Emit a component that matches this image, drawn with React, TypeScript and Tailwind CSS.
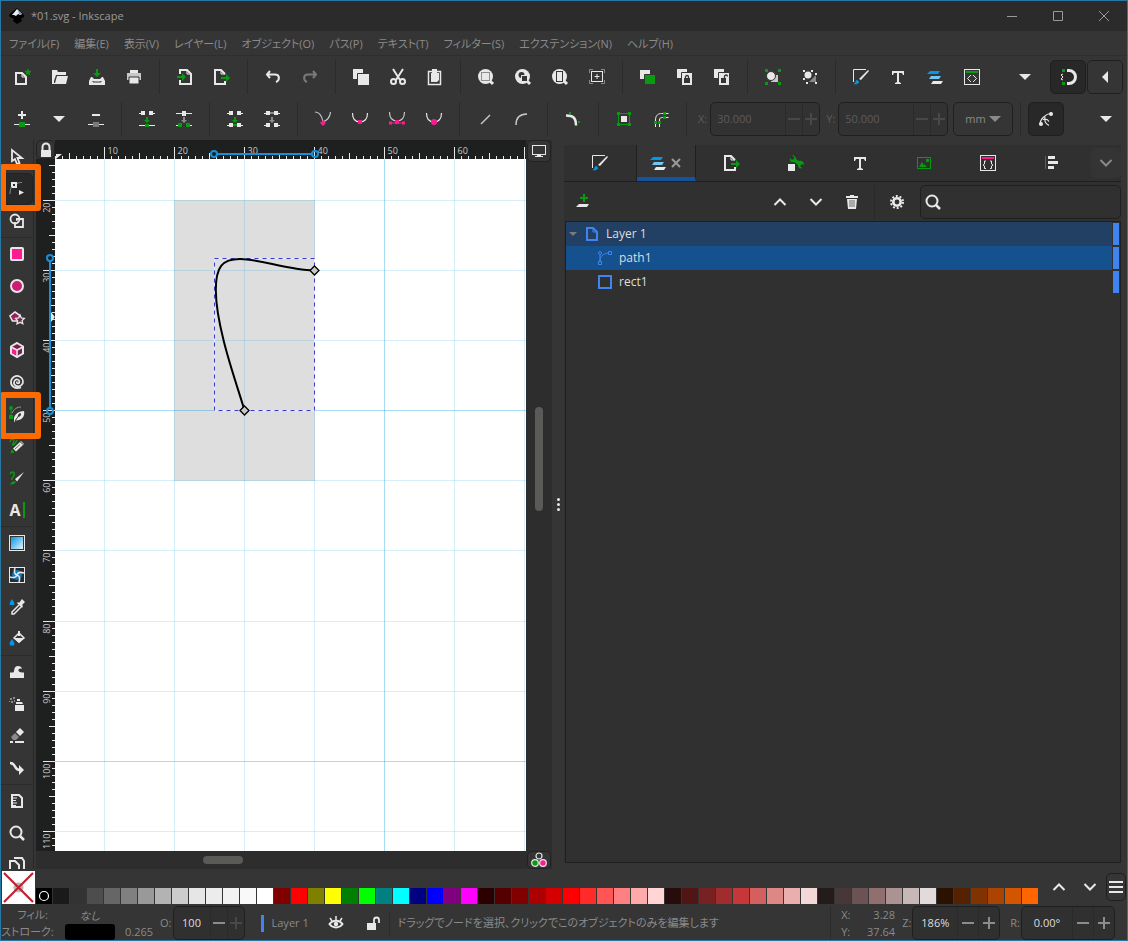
import type { ReactNode } from "react";
import clsx from "clsx";

const W = "#e8e8e8";
const G = "#089a0f";
const P = "#ff1a8f";
const B = "#0098e8";
const L = "#74c4f0";
const D = "#353535";

const star = "M13 0l.9 2.1 2.2.2-1.7 1.5.5 2.2-1.9-1.2L11.100 6l.5-2.200L9.900 2.300l2.200-.2z";

const icons: Record<string, ReactNode> = {
  new: (
    <>
      <path d="M1 4h6l4 4v7H1z" fill="none" stroke={W} strokeWidth="2" />
      <path d="M7 4v4h4" fill="none" stroke={W} />
      <path d={star} fill={G} stroke={G} strokeWidth=".6" />
    </>
  ),
  open: <path d="M0 1h5l1 2h8v3H4L2 12v2h1l2-7h11l-2 8H0z" fill={W} />,
  save: (
    <>
      <path d="M7 0h2v4h3L8 8 4 4h3z" fill={G} />
      <path d="M2 8h1l2 2h6l2-2h1l2 4v4H0v-4z" fill={W} />
      <path d="M4 12v1h8v-1" fill="none" stroke={D} />
    </>
  ),
  print: (
    <>
      <path d="M4 1h8v3H4z" fill={W} />
      <path d="M1 4h14v7H1z" fill="#c8c8c8" />
      <path d="M3 8h10v7H3z" fill={W} stroke={D} />
    </>
  ),
  import: (
    <>
      <path d="M3 5V1h7l4 4v10H3v-4" fill="none" stroke={W} strokeWidth="2" />
      <path d="M10 1v4h4" fill="none" stroke={W} />
      <path d="M0 7h5V4l4 4-4 4V9H0z" fill={G} />
    </>
  ),
  export: (
    <>
      <path d="M11 5L7 1H1v14h10v-3" fill="none" stroke={W} strokeWidth="2" />
      <path d="M7 1v4h4" fill="none" stroke={W} />
      <path d="M7 8h5V5l4 4-4 4v-3H7z" fill={G} />
    </>
  ),
  undo: <path d="M5 2L2 5.500 5 9M2 5.500h8c5 0 5 6 1 7.500" fill="none" stroke={W} strokeWidth="2" />,
  redo: <path d="M11 2l3 3.500L11 9M14 5.500H6c-5 0-5 6-1 7.500" fill="none" stroke="#7a7a7a" strokeWidth="2" />,
  copy: (
    <>
      <path d="M0 0h10v10H0z" fill={W} />
      <path d="M4.500 4.500h12v12h-12z" fill={W} stroke={D} />
    </>
  ),
  cut: (
    <>
      <path d="M3 0l7 11M13 0L6 11" stroke={W} strokeWidth="2" />
      <circle cx="3.500" cy="12.500" r="2.500" fill="none" stroke={W} strokeWidth="2" />
      <circle cx="12.500" cy="12.500" r="2.500" fill="none" stroke={W} strokeWidth="2" />
    </>
  ),
  paste: (
    <>
      <path d="M1.500 2.500h12v13h-12z" fill="none" stroke={W} strokeWidth="1.500" />
      <path d="M5 0h5v4H5zM4 4h8v7l-2 2H4z" fill={W} />
    </>
  ),
  zoomSelection: (
    <>
      <circle cx="7.500" cy="7.500" r="7.500" fill={W} />
      <path d="M12 12l3 3" stroke={W} strokeWidth="3" />
      <rect x="3.500" y="3.500" width="8" height="8" fill="none" stroke={D} strokeDasharray="1 1" />
    </>
  ),
  zoomDrawing: (
    <>
      <circle cx="7.500" cy="7.500" r="7.500" fill={W} />
      <path d="M12 12l3 3" stroke={W} strokeWidth="3" />
      <circle cx="6.500" cy="6" r="3" fill={D} />
      <path d="M6.500 6.500h6v6h-6z" fill={D} stroke={W} />
    </>
  ),
  zoomPage: (
    <>
      <circle cx="7.500" cy="7.500" r="7.500" fill={W} />
      <path d="M12 12l3 3" stroke={W} strokeWidth="3" />
      <rect x="4.500" y="2.500" width="6" height="10" fill={W} stroke={D} />
    </>
  ),
  zoomCenter: (
    <>
      <path d="M.5 4V.5H4M12 .5h3.500V4M15.500 11v3.500H12M4 14.500H.5V11" fill="none" stroke="#8a8a8a" />
      <rect x="2.500" y="2.500" width="11" height="10" fill="none" stroke={W} />
      <path d="M8 5v5M5.500 7.500h5" stroke={W} />
    </>
  ),
  duplicate: (
    <>
      <path d="M0 1h10v9H0z" fill={W} />
      <path d="M4.500 5.500h11v10h-11z" fill={G} stroke={D} />
    </>
  ),
  clone: (
    <>
      <path d="M0 0h10v9H0z" fill={W} />
      <path d="M4.500 3.500h11v13h-11z" fill={W} stroke={D} />
      <path d="M8.500 9V8a1.500 1.500 0 0 1 3 0v1" fill="none" stroke={D} strokeWidth="1.300" />
      <path d="M7 9h6v5H7z" fill={D} />
    </>
  ),
  unlink: (
    <>
      <path d="M0 0h10v9H0z" fill={W} />
      <path d="M4.500 3.500h11v13h-11z" fill={W} stroke={D} />
      <path d="M10.500 9V7.500a1.500 1.500 0 0 1 3 0" fill="none" stroke={D} strokeWidth="1.300" />
      <path d="M7 9h5v5H7z" fill={D} />
    </>
  ),
  group: (
    <>
      <path d="M0 0h3v3H0zM13 0h3v3h-3zM0 13h3v3H0zM13 13h3v3h-3z" fill={G} />
      <path d="M7 6h6v7H6z" fill="#c8c8c8" />
      <circle cx="6" cy="7" r="4.500" fill={W} stroke={D} />
    </>
  ),
  ungroup: (
    <>
      <path d="M1 1h2v2H1zM9 1h2v2H9zM1 9h2v2H1zM4 13h2v2H4zM13 4h2v2h-2zM13 13h2v2h-2z" fill={W} />
      <path d="M7 13l7-7v7z" fill="#8a8a8a" />
      <circle cx="6" cy="6" r="3.500" fill={W} />
    </>
  ),
  fillStroke: (
    <>
      <path d="M13 .5H.5V13" fill="none" stroke={W} />
      <path d="M15 1l1 1-8 9-2-1z" fill={W} />
      <path d="M4 11l2 2c-1 2-3 2-5 2 2-1 1-2 3-4z" fill={B} stroke={B} strokeWidth=".6" />
    </>
  ),
  text: <path d="M2 2h12v4h-1l-1-2H9v9l2 1v1H5v-1l2-1V4H4L3 6H2z" fill={W} />,
  layers: (
    <>
      <path d="M3 2h10l-2 3H0z" fill={B} />
      <path d="M4 7h10l-2 3H2z" fill={L} />
      <path d="M6 12h10l-2 3H4z" fill={W} />
    </>
  ),
  xml: (
    <>
      <rect x=".5" y=".5" width="15" height="15" fill="none" stroke={W} />
      <path d="M2 2h12v2H2z" fill={G} />
      <path d="M7 6L3.500 9.500 7 13M9 6l3.500 3.500L9 13" fill="none" stroke={W} />
    </>
  ),
  down: <path d="M2 5h12l-6 6z" fill={W} />,
  left: <path d="M11 2v12L5 8z" fill={W} />,
  snap: (
    <>
      <path d="M7 1.500h2a6.500 6.500 0 0 1 0 13H7" fill="none" stroke={W} strokeWidth="3" />
      <path d="M2 0h3v3H2zM2 13h3v3H2z" fill={G} />
      <path d="M3 5L1 6l2 2-2 2 2 1" fill="none" stroke={W} />
    </>
  ),
  addNode: (
    <>
      <path d="M8 0v8M4 4h8" stroke={W} strokeWidth="2" />
      <path d="M0 13.500h16" stroke={W} />
      <path d="M5 11h6v5H5z" fill={G} />
    </>
  ),
  deleteNode: (
    <>
      <path d="M4 4h8" stroke={W} strokeWidth="2" />
      <path d="M0 13.500h16" stroke={W} />
      <path d="M5 11h6v5H5z" fill="#7a7a7a" />
    </>
  ),
  joinNodes: (
    <>
      <path d="M0 2.500h3M13 2.500h3M0 14.500h16" stroke={W} />
      <path d="M2 0h4v4H2zM10 0h4v4h-4z" fill={W} />
      <path d="M7 6h2v3h2l-3 3-3-3h2zM6 13h4v3H6z" fill={G} />
    </>
  ),
  breakNodes: (
    <>
      <path d="M0 2.500h16" stroke={W} />
      <path d="M6 0h4v5H6z" fill={W} />
      <path d="M7 6h2v3h2l-3 3-3-3h2z" fill="#8a8a8a" />
      <path d="M0 14.500h3M13 14.500h3" stroke={W} />
      <path d="M2 12h4v4H2zM10 12h4v4h-4z" fill={G} />
    </>
  ),
  joinSegment: (
    <>
      <path d="M0 2.500h3M13 2.500h3M0 14.500h3M13 14.500h3" stroke={W} />
      <path d="M2 0h4v4H2zM10 0h4v4h-4zM2 12h4v4H2zM10 12h4v4h-4z" fill={W} />
      <path d="M7 6h2v3h2l-3 3-3-3h2zM6 13h4v2H6z" fill={G} />
    </>
  ),
  deleteSegment: (
    <>
      <path d="M0 2.500h3M13 2.500h3M0 14.500h3M13 14.500h3" stroke={W} />
      <path d="M2 0h4v4H2zM10 0h4v4h-4zM2 12h4v4H2zM10 12h4v4h-4z" fill={W} />
      <path d="M7 6h2v3h2l-3 3-3-3h2zM6 1h4v2H6z" fill="#8a8a8a" />
    </>
  ),
  cusp: (
    <>
      <path d="M0 1c5 0 7 4 8 10 4-2 7-4 7.500-10" fill="none" stroke="#c8c8c8" strokeWidth="1.200" />
      <path d="M8 9l3 3-3 3-3-3z" fill={P} />
    </>
  ),
  smooth: (
    <>
      <path d="M.5 2c0 6 3 9 7.500 9s7.500-3 7.500-9" fill="none" stroke={W} strokeWidth="1.200" />
      <path d="M6 9h4v4H6z" fill={P} />
    </>
  ),
  symmetric: (
    <>
      <path d="M.5 1c0 6 3 9 7.500 9s7.500-3 7.500-9" fill="none" stroke="#c8c8c8" strokeWidth="1.200" />
      <path d="M6 9h4v4H6zM0 10.500h3v3H0zM13 10.500h3v3h-3zM3 11.500h10v1H3z" fill={P} />
    </>
  ),
  auto: (
    <>
      <path d="M.5 2c0 6 3 9 7.500 9s7.500-3 7.500-9" fill="none" stroke={W} strokeWidth="1.200" />
      <circle cx="8" cy="11" r="3" fill={P} />
    </>
  ),
  line: <path d="M4 13l9-9" stroke="#c8c8c8" strokeWidth="1.500" />,
  curve: <path d="M2 14C2 7 6 3 13 3" fill="none" stroke="#c8c8c8" strokeWidth="1.500" />,
  corner: (
    <>
      <path d="M1 4.500c7 0 10 2 10 10" fill="none" stroke={W} strokeWidth="2.500" />
      <path d="M4 1h2v2H4zM13 10h2v2h-2z" fill={G} />
    </>
  ),
  objectPath: (
    <>
      <rect x="2.500" y="2.500" width="11" height="11" fill="none" stroke={G} />
      <path d="M1 1h3v3H1zM12 1h3v3h-3zM1 12h3v3H1zM12 12h3v3h-3z" fill={G} />
      <path d="M5 5h6v6H5z" fill={W} />
    </>
  ),
  strokePath: (
    <>
      <path d="M2.500 16V9c0-5 3-6.500 6-6.500h7M6.500 16V9c0-2 1-2.500 3-2.500h6" fill="none" stroke={W} />
      <path d="M10 1h3v3h-3zM10 5h3v3h-3zM1 10h3v3H1zM5 10h3v3H5z" fill={G} />
    </>
  ),
  handles: (
    <>
      <path d="M2 14C2 8 7 3 14 2M7 5.500c-1 4 0 7 4 9M5 8.500c3-1 5 0 6 2" fill="none" stroke={W} strokeWidth="1.200" />
      <circle cx="3" cy="13" r="2" fill={W} />
      <circle cx="13" cy="3" r="2" fill={W} />
    </>
  ),
  selector: <path d="M3 1v11l3-2 2 5 2.500-1-2-5H13z" fill="none" stroke={W} strokeWidth="1.800" />,
  node: (
    <>
      <rect x="3" y="2" width="4" height="4" fill="none" stroke={W} strokeWidth="2" />
      <path d="M8 2.500c2-1 3-1 5-1M2.500 6c-1 2-1.500 4-1.500 7" fill="none" stroke="#8a8a8a" />
      <path d="M10 9l5 2.500-5 2.500z" fill={W} />
    </>
  ),
  builder: (
    <>
      <circle cx="6" cy="6" r="4.500" fill="none" stroke={W} strokeWidth="1.800" />
      <path d="M7 6h7v8H6V9" fill="none" stroke={W} strokeWidth="1.800" />
      <path d="M7 7l3 2" stroke={W} />
    </>
  ),
  rect: <rect x="2" y="2" width="12" height="12" fill={P} stroke={W} strokeWidth="2" rx="1" />,
  ellipse: <circle cx="8" cy="8" r="6" fill="#cc1c74" stroke={W} strokeWidth="2" />,
  polygon: (
    <>
      <path d="M6 2l5 3.500L9.500 11h-6L1 6z" fill="#a01c60" stroke={W} strokeWidth="1.600" />
      <path d="M11 5l1.300 3 3 .4-2.200 2.200.7 3.200-2.800-1.500L8 13.800l.6-3.200-2.100-2.200 3.200-.4z" fill="#6a2a4a" stroke={W} strokeWidth="1.300" />
    </>
  ),
  box: (
    <>
      <path d="M8 1l6 3.500v7L8 15l-6-3.500v-7z" fill="#7a2050" stroke={W} strokeWidth="2" />
      <path d="M3 6l4 2v5l-4-2z" fill={P} />
      <path d="M2 5l6 3 6-3M8 8v6" fill="none" stroke={W} strokeWidth="1.600" />
    </>
  ),
  spiral: (
    <path d="M12 13.500C6 15.500 1.500 12 2 7.500 2.500 3 7 1 10.500 2.500 14 4 15 8 13 10.500c-2 2.500-6 2.500-7.500 0C4 8 6 5 8.500 5.500c2.500.5 2.500 3.500.500 4C7.500 9.500 7.500 8 8.500 7.800" fill="none" stroke={W} strokeWidth="1.700" />
  ),
  pen: (
    <>
      <path d="M2 2v9" stroke={G} />
      <circle cx="2" cy="2" r="2" fill={G} />
      <path d="M0 9h4v4H0z" fill={G} />
      <path d="M3 7c2-4 5-6 9-6" fill="none" stroke="#9a9a9a" />
      <path d="M15 5c1 4-1 8-5 9l-3 .5-2 1.500v-4c1-4 5-7 10-7z" fill={W} />
      <path d="M6 15l3.500-5" stroke={D} />
      <ellipse cx="10.500" cy="9" rx="1.200" ry="2" transform="rotate(35 10.500 9)" fill={D} />
    </>
  ),
  pencil: (
    <>
      <path d="M1 4c1-4 4-4 4-1S2 7 4 7s3-3 4-5" fill="none" stroke={G} strokeWidth="1.400" />
      <path d="M2 15l1-3 2 2z" fill={G} stroke={G} />
      <path d="M4 10.500L12 3l3 3-8 7.500z" fill={W} />
      <path d="M11 3.500l3 3" stroke={D} />
      <path d="M6 11l5-4.500" stroke={D} strokeWidth=".7" />
    </>
  ),
  calligraphy: (
    <>
      <path d="M1 4c2-3 5-2 4 1S2 8 3 10" fill="none" stroke={G} strokeWidth="1.600" />
      <path d="M6 11c-2 0-4 1-5 3.500 3 0 4 0 6-2.500z" fill={G} />
      <path d="M15 2l-9 7 2 2.500z" fill={W} />
    </>
  ),
  gradient: (
    <>
      <defs>
        <linearGradient id="blue-fade" x1="0" y1="0" x2="1" y2="1">
          <stop offset="0" stopColor={B} />
          <stop offset="1" stopColor="#e8f4fb" />
        </linearGradient>
      </defs>
      <rect x=".5" y=".5" width="15" height="15" fill="none" stroke={W} />
      <path d="M2 2h12v12H2z" fill="url(#blue-fade)" />
    </>
  ),
  mesh: (
    <>
      <rect x=".5" y=".5" width="15" height="15" fill="#252b30" stroke={W} />
      <circle cx="8" cy="8" r="5" fill="#0c7abc" />
      <path d="M8 8c-3-1-3-4-2-7M8 8c1-3 4-3 7-2M8 8c3 1 3 4 2 7M8 8c-1 3-4 3-7 2" fill="none" stroke={W} strokeWidth="1.500" />
    </>
  ),
  dropper: (
    <>
      <path d="M3 0c2 3 3 4 2 6H1C0 4 1 3 3 0z" fill={B} />
      <path d="M10 6l-7 7v2h2l7-7" fill="none" stroke={W} strokeWidth="1.500" />
      <path d="M8 4l5 5 1-2-1-1 3-3-3-3-3 4-1-1z" fill={W} />
    </>
  ),
  bucket: (
    <>
      <path d="M3 8c2 3 3 4 2 6.500H1C0 12 1 11 3 8z" fill={B} />
      <path d="M5 7l5-5 5 5-5 4z" fill="none" stroke={W} strokeWidth="1.500" />
      <path d="M5 7h10l-5 5zM9 0h2v5H9z" fill={W} />
    </>
  ),
  tweak: <path d="M1 14V8.500h3c2 0 0-6.500 5-6.500 2 0 4 1 4 3-2-1-4 0-3.500 2 1 1.500 3 1.500 5.500 1.500V14z" fill={W} />,
  spray: (
    <>
      <path d="M6 9h9v6H6zM7 6h6l1 2H7zM8 3h3v2H8z" fill={W} />
      <path d="M1 2h2v2H1zM4 1h2v2H4zM2 5h2v2H2zM5 4h1v2H5zM0 5h1v1H0z" fill="#8a8a8a" />
    </>
  ),
  eraser: (
    <>
      <path d="M7 4l4-4 4 4-4 4z" fill={W} />
      <path d="M6 5l4 4-3 3H4L2 9z" fill="#8a8a8a" />
      <path d="M1 13h3v2H1zM6 13h9v2H6z" fill={W} />
    </>
  ),
  connector: (
    <>
      <path d="M1 3c7 0 3 7 10 7" fill="none" stroke={W} strokeWidth="2.500" />
      <path d="M10 5l5 5-5 5z" fill={W} />
    </>
  ),
  measure: (
    <>
      <path d="M3 2h7l3 3v9H3z" fill="none" stroke={W} strokeWidth="2" />
      <path d="M4 5h4M4 7.500h3M4 10h4M4 12.500h3" stroke={W} />
    </>
  ),
  zoom: (
    <>
      <circle cx="7" cy="7" r="5.500" fill="none" stroke={W} strokeWidth="2" />
      <path d="M11 11l4 4" stroke={W} strokeWidth="2.500" />
    </>
  ),
  pages: (
    <>
      <path d="M1 7V4h5l4 4v7H1z" fill="none" stroke={W} strokeWidth="2" />
      <path d="M5 1h8l2 3v9" fill="none" stroke={W} strokeWidth="2" />
    </>
  ),
  lock: (
    <>
      <path d="M4.500 8V5a3.500 3.500 0 0 1 7 0v3" fill="none" stroke={W} strokeWidth="2" />
      <path d="M3 8h10v7H3z" fill={W} />
    </>
  ),
  unlock: (
    <>
      <path d="M9 8V5a2.500 2.500 0 0 1 5 0v3" fill="none" stroke={W} strokeWidth="1.800" />
      <path d="M2 8h9v7H2z" fill={W} />
    </>
  ),
  display: (
    <>
      <rect x="1.500" y="2.500" width="13" height="9" fill="none" stroke={W} />
      <path d="M6 12h4v1h2v1H4v-1h2z" fill={W} />
    </>
  ),
  colors: (
    <>
      <circle cx="8" cy="4" r="3" fill="none" stroke={W} strokeWidth="1.200" />
      <circle cx="4" cy="11" r="3.300" fill={G} stroke={W} strokeWidth="1.200" />
      <circle cx="12" cy="11" r="3.300" fill={P} stroke={W} strokeWidth="1.200" />
    </>
  ),
  wrench: (
    <>
      <path d="M0 9h7v7H0z" fill={W} />
      <path d="M4 0l2 2v2l-2 1-2-2C1 6 3 8 6 7l4 3c0 3 2 4 4 3l-2-2 2-2 2 1c0-3-2-5-5-4L8 4c0-2-2-4-4-4z" fill={G} />
    </>
  ),
  image: (
    <>
      <rect x="1.500" y="2.500" width="13" height="11" fill="none" stroke={G} />
      <path d="M3 12l3-5 3 5zM10 4h3v3h-3zM8 9l3 3H8z" fill={G} />
    </>
  ),
  css: (
    <>
      <rect x=".5" y=".5" width="15" height="15" fill="none" stroke={W} />
      <path d="M2 2h12v2H2z" fill={P} />
      <path d="M6 6H4.500v3L3 10l1.500 1v2.500H6M10 6h1.500v3l1.500 1-1.500 1v2.500H10" fill="none" stroke={W} />
    </>
  ),
  align: (
    <>
      <path d="M1.500 1v13" stroke={G} />
      <path d="M4 1h7v3H4zM4 6h10v3H4zM4 11h6v3H4z" fill={W} />
    </>
  ),
  addLayer: (
    <>
      <path d="M9 0v8M5 4h8" stroke={G} strokeWidth="2" />
      <path d="M4 10h10l-2 3H1z" fill={W} />
    </>
  ),
  up: <path d="M2.500 11L8 5.500l5.500 5.500" fill="none" stroke={W} strokeWidth="2" />,
  chevron: <path d="M2.500 5L8 10.500 13.500 5" fill="none" stroke={W} strokeWidth="2" />,
  chevronDim: <path d="M2.500 5L8 10.500 13.500 5" fill="none" stroke="#8a8a8a" strokeWidth="2" />,
  trash: (
    <>
      <path d="M2 3V2h4V1h4v1h4v2H2zM3 5h10l-1 10H4z" fill={W} />
      <path d="M6 6v7M8 6v7M10 6v7" stroke="#6a6a6a" />
    </>
  ),
  gear: (
    <>
      <circle cx="8" cy="8" r="3.700" fill="none" stroke={W} strokeWidth="2.600" />
      <circle cx="8" cy="8" r="6" fill="none" stroke={W} strokeWidth="2" strokeDasharray="1.900 1.870" />
    </>
  ),
  layerPage: (
    <>
      <path d="M3 2h6l4 4v8H3z" fill="none" stroke="#4084f0" strokeWidth="2" />
      <path d="M9 2v4h4" fill="none" stroke="#4084f0" />
    </>
  ),
  pathItem: (
    <>
      <path d="M3 5v7M3 11c0-5 3-7 8-8" fill="none" stroke="#4084f0" />
      <circle cx="3" cy="3" r="1.500" fill="none" stroke="#4084f0" />
      <path d="M11.500 1.500h3v3h-3zM1.500 11.500h3v3h-3z" fill="none" stroke="#4084f0" />
    </>
  ),
  rectItem: <rect x="2" y="2" width="12" height="12" fill="none" stroke="#4084f0" strokeWidth="2" />,
  eye: (
    <>
      <path d="M1.500 9c3-4.500 10-4.500 13 0-3 4.500-10 4.500-13 0z" fill="none" stroke={W} strokeWidth="2" />
      <circle cx="8" cy="9" r="2.200" fill={W} />
      <path d="M8 1v4M2 3l2 3M14 3l-2 3" stroke={W} strokeWidth="1.500" />
    </>
  ),
  menu: <path d="M1 3h14M1 8h14M1 13h14" stroke={W} strokeWidth="2" />,
};

const menus = ["ファイル(F)", "編集(E)", "表示(V)", "レイヤー(L)", "オブジェクト(O)", "パス(P)", "テキスト(T)", "フィルター(S)", "エクステンション(N)", "ヘルプ(H)"];

const commandGroups = [
  ["new", "open", "save", "print"],
  ["import", "export"],
  ["undo", "redo"],
  ["copy", "cut", "paste"],
  ["zoomSelection", "zoomDrawing", "zoomPage", "zoomCenter"],
  ["duplicate", "clone", "unlink"],
  ["group", "ungroup"],
  ["fillStroke", "text", "layers", "xml"],
];

const nodeGroups = [
  ["addNode", "down", "deleteNode"],
  ["joinNodes", "breakNodes"],
  ["joinSegment", "deleteSegment"],
  ["cusp", "smooth", "symmetric", "auto"],
  ["line", "curve"],
  ["corner"],
  ["objectPath", "strokePath"],
];

const toolGroups = [
  ["selector", "node", "builder"],
  ["rect", "ellipse", "polygon", "box", "spiral", "pen", "pencil", "calligraphy", "textTool"],
  ["gradient", "mesh", "dropper", "bucket"],
  ["tweak", "spray", "eraser", "connector"],
  ["measure", "zoom", "pages"],
];

const panelTabs = ["export", "wrench", "text", "image", "css", "align"];

const layerRows = [
  { name: "Layer 1", icon: "layerPage", row: "bg-[#214064] pl-[3px]", expandable: true },
  { name: "path1", icon: "pathItem", row: "bg-[#15508f] pl-[31px]", expandable: false },
  { name: "rect1", icon: "rectItem", row: "pl-[31px]", expandable: false },
];

const palette = [
  "#1a1a1a", "#333333", "#4d4d4d", "#666666", "#808080", "#999999", "#b3b3b3", "#cccccc", "#e6e6e6", "#ececec", "#f2f2f2", "#f9f9f9", "#ffffff",
  "#800000", "#ff0000", "#808000", "#ffff00", "#008000", "#00ff00", "#008080", "#00ffff", "#000080", "#0000ff", "#800080", "#ff00ff",
  "#2b0000", "#550000", "#800000", "#aa0000", "#d40000", "#ff0000", "#ff2a2a", "#ff5555", "#ff8080", "#ffaaaa", "#ffd5d5",
  "#280b0b", "#501616", "#782121", "#a02c2c", "#c83737", "#d35f5f", "#de8787", "#e9afaf", "#f4d7d7",
  "#241c1c", "#483737", "#6c5353", "#916f6f", "#ac9393", "#c8b7b7", "#e3dbdb",
  "#2b1100", "#552200", "#803300", "#aa4400", "#d45500", "#ff6600",
];

const Icon = ({ name }: { name: string }) => (
  <svg viewBox="0 0 16 16" className="size-4 shrink-0 overflow-visible" aria-hidden="true">
    {icons[name]}
  </svg>
);

const ToolbarGroups = ({ groups }: { groups: string[][] }) => (
  <>
    {groups.map((group, index) => (
      <div key={index} className="flex shrink-0 items-center">
        {index > 0 && <div className="ml-[7px] mr-[6px] h-[34px] w-px bg-[#2b2b2b]" />}
        {group.map((name) => (
          <button key={name} aria-label={name} className="flex h-[34px] items-center pl-[11px] pr-[10px]">
            <Icon name={name} />
          </button>
        ))}
      </div>
    ))}
  </>
);

type SpinProps = { id: string; label: string; value: string; width: string; step: string; dim?: boolean; dimPlus?: boolean };

const Spin = ({ id, label, value, width, step, dim, dimPlus }: SpinProps) => (
  <div className={clsx("flex shrink-0 items-center", dim ? "gap-[3px]" : "gap-px")}>
    <label htmlFor={id} className={dim ? "text-[#5c5c5c]" : "text-[#8a8a8a]"}>{label}</label>
    <div className={clsx("flex h-[34px] overflow-hidden rounded-[5px] border border-[#1f1f1f]", width, dim ? "bg-[#323232]" : "bg-[#303030]")}>
      <input
        id={id}
        defaultValue={value}
        className={clsx("min-w-0 flex-1 bg-transparent outline-none", dim ? "pl-[6px] text-[#5c5c5c]" : "text-center text-[#dedede]")}
      />
      <button aria-label={`${label} -`} className={clsx("flex items-center justify-center border-l border-[#2a2a2a]", step, dim ? "text-[#484848]" : "text-[#8c8c8c]")}>
        <svg viewBox="0 0 12 12" className="size-3 shrink-0"><path d="M0 6h12" stroke="currentColor" strokeWidth="2" /></svg>
      </button>
      <button aria-label={`${label} +`} className={clsx("flex items-center justify-center border-l border-[#2a2a2a]", step, dim || dimPlus ? "text-[#484848]" : "text-[#8c8c8c]")}>
        <svg viewBox="0 0 12 12" className="size-3 shrink-0"><path d="M0 6h12M6 0v12" stroke="currentColor" strokeWidth="2" /></svg>
      </button>
    </div>
  </div>
);

const gridX = (unit: number) => 49.5 + 7 * unit;
const gridY = (unit: number) => Math.floor(41.3 + 7.012 * unit) + 0.5;
const tickLength = (unit: number) => (unit % 10 === 0 ? 12 : unit % 5 === 0 ? 6 : 3);

const TopRuler = () => (
  <svg className="h-[19px] min-w-0 flex-1 bg-[#1e201f]">
    {Array.from({ length: 75 }, (_, i) => i - 7).map((unit) => (
      <path key={unit} d={`M${gridX(unit)} 19v-${tickLength(unit)}`} stroke={W} />
    ))}
    {[0, 10, 20, 30, 40, 50].map((unit) => (
      <text key={unit} x={gridX(unit) + 3} y="14" fill="#c8c8c8" fontSize="9">{unit + 10}</text>
    ))}
    <path d="M1 14h6l-6 5z" fill={W} />
    <path d="M162 14h95" stroke="#1a8fd6" strokeWidth="2" />
    <circle cx="159" cy="14" r="3" fill="none" stroke="#1a8fd6" strokeWidth="2" />
    <circle cx="260" cy="14" r="3" fill="none" stroke="#1a8fd6" strokeWidth="2" />
  </svg>
);

const SideRuler = () => (
  <svg className="w-[19px] shrink-0 bg-[#1e201f]">
    {Array.from({ length: 300 }, (_, i) => i - 5).map((unit) => (
      <path key={unit} d={`M19 ${gridY(unit)}h-${tickLength(unit)}`} stroke={W} />
    ))}
    {[0, 10, 20, 30, 40, 50, 60, 70, 80, 90].map((unit) => (
      <text key={unit} transform={`translate(14 ${gridY(unit) + 2}) rotate(-90)`} textAnchor="end" fill="#c8c8c8" fontSize="9">{unit + 20}</text>
    ))}
    <path d="M15 153l4 5-4 5z" fill={W} />
    <path d="M14 102v147" stroke="#1a8fd6" strokeWidth="2" />
    <circle cx="14" cy="99" r="3" fill="none" stroke="#1a8fd6" strokeWidth="2" />
    <circle cx="14" cy="252" r="3" fill="none" stroke="#1a8fd6" strokeWidth="2" />
  </svg>
);

const Drawing = () => (
  <svg className="min-w-0 flex-1 bg-white">
    <rect x="119" y="41" width="141" height="281" fill="#dedede" />
    {Array.from({ length: 30 }, (_, i) => i).map((i) => (
      <g key={i} stroke="#0096e0">
        <path d={`M${gridX(i * 10)} 0v3000`} strokeOpacity={i % 5 === 4 ? 0.34 : 0.16} />
        <path d={`M0 ${gridY(i * 10)}h3000`} strokeOpacity={i % 5 === 3 ? 0.34 : 0.16} />
      </g>
    ))}
    <rect x="159.500" y="99.500" width="100" height="152" fill="none" stroke="#ececf6" />
    <rect x="159.500" y="99.500" width="100" height="152" fill="none" stroke="#3a3ad0" strokeDasharray="4 4" />
    <path
      d="M189.500 251.500C183 228 161 170 160.800 131C160.800 108 167 100 185 100C205 100 232 111 259.500 111.500"
      fill="none"
      stroke="#000"
      strokeWidth="2"
    />
    <path d="M259.500 107l4.500 4.500-4.500 4.500-4.500-4.500zM189.500 247l4.500 4.500-4.500 4.500-4.500-4.500z" fill="#c8c8c8" stroke="#000" strokeWidth="1.300" />
  </svg>
);

const Toolbox = () => (
  <div className="flex w-8 shrink-0 flex-col overflow-hidden pt-px">
    {toolGroups.map((group, index) => (
      <div key={index} className={clsx("flex flex-col", index > 0 && "border-t border-[#2b2b2b]")}>
        {group.map((name) => (
          <button
            key={name}
            aria-label={name}
            className={clsx("flex h-8 w-8 shrink-0 items-center justify-center", name === "node" && "rounded-[5px] border border-[#222] bg-[#282828]")}
          >
            {name === "textTool" ? (
              <span className="flex items-center gap-[2px] text-base font-bold leading-4 text-[#e8e8e8]">
                A<span className="h-4 w-[2px] bg-[#089a0f]" />
              </span>
            ) : (
              <Icon name={name} />
            )}
          </button>
        ))}
      </div>
    ))}
  </div>
);

const LayersPanel = () => (
  <aside className="mb-[6px] mr-[6px] mt-[5px] flex min-w-0 flex-1 flex-col bg-[#303030]">
    <div className="flex h-[37px] shrink-0 border-b border-[#1f1f1f]">
      <button aria-label="fill and stroke" className="flex w-[73px] items-center justify-center border-r border-[#1f1f1f]">
        <Icon name="fillStroke" />
      </button>
      <button aria-label="layers" className="flex w-[59px] items-center justify-center gap-1 border-b-4 border-r border-b-[#15539e] border-r-[#1f1f1f] bg-[#353535] pt-1">
        <Icon name="layers" />
        <svg viewBox="0 0 12 12" className="size-3"><path d="M2 2l8 8M10 2l-8 8" stroke="#9a9a9a" strokeWidth="2" /></svg>
      </button>
      <div className="ml-1 flex min-w-0">
        {panelTabs.map((name) => (
          <button key={name} aria-label={name} className="flex w-16 items-center justify-center">
            <Icon name={name} />
          </button>
        ))}
      </div>
      <button aria-label="more" className="my-[3px] ml-auto flex w-[30px] items-center justify-center rounded-[5px] bg-[#343434]">
        <Icon name="chevronDim" />
      </button>
    </div>
    <div className="flex h-[39px] shrink-0 items-center">
      <button aria-label="add layer" className="flex h-9 w-[38px] items-center justify-center">
        <Icon name="addLayer" />
      </button>
      <div className="ml-auto flex items-center">
        {["up", "chevron", "trash"].map((name) => (
          <button key={name} aria-label={name} className="flex h-9 w-9 items-center justify-center">
            <Icon name={name} />
          </button>
        ))}
        <div className="ml-1 h-[34px] w-px bg-[#292929]" />
        <button aria-label="settings" className="flex h-9 w-[45px] items-center justify-center pr-[2px]">
          <Icon name="gear" />
        </button>
        <label className="flex h-[34px] w-[201px] items-center rounded-[5px] border border-[#1f1f1f] pl-1">
          <Icon name="zoom" />
          <input type="search" aria-label="search" className="min-w-0 flex-1 bg-transparent px-2 outline-none" />
        </label>
      </div>
    </div>
    <ul className="ml-px min-h-0 flex-1 border border-[#1f1f1f] text-[#dedede]">
      {layerRows.map((row) => (
        <li key={row.name} className="flex h-6">
          <button className={clsx("flex min-w-0 flex-1 items-center text-left", row.row)}>
            {row.expandable && (
              <svg viewBox="0 0 8 8" className="mr-[7px] size-2"><path d="M0 2h8L4 6z" fill="#7a7a7a" /></svg>
            )}
            <Icon name={row.icon} />
            <span className="pl-[6px] text-xs">{row.name}</span>
          </button>
          <span className="my-px ml-px mr-px w-[6px] bg-[#4084f0]" />
        </li>
      ))}
    </ul>
  </aside>
);

const App = () => {
  return (
    <div className="flex h-screen flex-col overflow-hidden border border-[#2878a4] bg-[#353535] font-['Open_Sans','Noto_Sans_CJK_JP',sans-serif] text-[11px] leading-4 text-[#8a8a8a]">
      {/* Title bar */}
      <header className="flex h-[30px] shrink-0 items-center bg-[#2b2b2b] pl-2 text-[#9a9a9a]">
        <svg viewBox="0 0 16 16" className="size-4" aria-hidden="true">
          <path d="M8 0l7 7c1 2-1 3-3 3l1 3-5 3-4-3 1-2-4-2c-1-1-1-2 0-3z" fill="#000" />
          <path d="M8 1l5 5-2 1-2-1-2 2-2-1-2 0z" fill="#e8eef6" />
          <path d="M9 2l4 4-2 1-1-1z" fill="#7a9ac0" />
        </svg>
        <h1 className="pl-[6px]">*01.svg - Inkscape</h1>
        <div className="ml-auto flex">
          <button aria-label="minimize" className="flex w-[46px] justify-center">
            <svg viewBox="0 0 10 10" className="size-[10px]"><path d="M0 5.500h10" stroke="#9a9a9a" /></svg>
          </button>
          <button aria-label="maximize" className="flex w-[46px] justify-center">
            <svg viewBox="0 0 10 10" className="size-[10px]"><path d="M.5.5h9v9h-9z" fill="none" stroke="#9a9a9a" /></svg>
          </button>
          <button aria-label="close" className="flex w-[46px] justify-center">
            <svg viewBox="0 0 10 10" className="size-[10px]"><path d="M0 0l10 10M10 0L0 10" stroke="#9a9a9a" /></svg>
          </button>
        </div>
      </header>

      {/* Menu bar */}
      <nav className="flex h-[25px] shrink-0 items-center gap-[15px] border-b border-[#2e2e2e] pl-2 pt-[2px] [font-feature-settings:'palt']">
        {menus.map((menu) => (
          <button key={menu} className="shrink-0 whitespace-nowrap">{menu}</button>
        ))}
      </nav>

      {/* Commands bar */}
      <div className="flex h-[42px] shrink-0 items-center pl-[3px] pr-1">
        <ToolbarGroups groups={commandGroups} />
        <button aria-label="more commands" className="ml-auto mr-[7px] flex h-[34px] w-9 items-center justify-center">
          <Icon name="down" />
        </button>
        <button aria-label="snap" className="mr-px flex h-[34px] w-9 items-center justify-center rounded-[5px] border border-[#1f1f1f] bg-[#282828]">
          <Icon name="snap" />
        </button>
        <button aria-label="snap options" className="flex h-[34px] w-9 items-center justify-center rounded-[5px] border border-[#1f1f1f]">
          <Icon name="left" />
        </button>
      </div>

      {/* Node tool controls */}
      <div className="flex h-[42px] shrink-0 items-center pl-[2px] pr-1">
        <ToolbarGroups groups={nodeGroups} />
        <div className="ml-[7px] mr-[11px] h-[34px] w-px bg-[#2b2b2b]" />
        <Spin id="node-x" label="X:" value="30.000" width="w-[110px]" step="w-[17px]" dim />
        <div className="w-[6px]" />
        <Spin id="node-y" label="Y:" value="50.000" width="w-[110px]" step="w-[17px]" dim />
        <div className="relative ml-[5px] flex h-[34px] w-[60px] items-center rounded-[5px] border border-[#1f1f1f]">
          <select aria-label="unit" className="h-full w-full appearance-none bg-transparent pl-[11px] outline-none">
            <option>mm</option>
          </select>
          <svg viewBox="0 0 12 6" className="pointer-events-none absolute right-[11px] h-[6px] w-3"><path d="M0 0h12L6 6z" fill="#8a8a8a" /></svg>
        </div>
        <div className="mx-[7px] h-[34px] w-px shrink-0 bg-[#2b2b2b]" />
        <button aria-label="show handles" className="flex h-[34px] w-9 items-center justify-center rounded-[5px] border border-[#1f1f1f] bg-[#282828]">
          <Icon name="handles" />
        </button>
        <button aria-label="more controls" className="ml-auto flex h-[34px] w-[34px] items-center justify-center">
          <Icon name="down" />
        </button>
      </div>

      {/* Work area */}
      <main className="relative flex min-h-0 flex-1">
        <Toolbox />
        <div className="w-[3px] shrink-0 border-l border-[#282828]" />
        <div className="flex w-[516px] shrink-0">
          <div className="flex min-w-0 flex-1 flex-col">
            <div className="flex h-[19px] shrink-0">
              <button aria-label="lock guides" className="flex h-[19px] w-[19px] items-center justify-center rounded-[5px] border border-[#222]">
                <Icon name="lock" />
              </button>
              <TopRuler />
            </div>
            <div className="flex min-h-0 flex-1">
              <SideRuler />
              <Drawing />
            </div>
            <div className="flex h-[18px] shrink-0 items-center bg-[#2d2d2d]">
              <div className="ml-[34%] h-2 w-10 rounded-full bg-[#5a5a58]" />
            </div>
          </div>
          <div className="flex w-[26px] shrink-0 flex-col items-center bg-[#2d2d2d]">
            <button aria-label="display mode" className="flex h-[22px] w-6 shrink-0 items-center justify-center rounded-[5px] border border-[#222] bg-[#353535]">
              <Icon name="display" />
            </button>
            <div className="flex min-h-0 flex-1 flex-col pt-[245px]">
              <div className="h-[104px] w-2 rounded-full bg-[#5a5a58]" />
            </div>
            <button aria-label="color management" className="flex h-[18px] w-6 shrink-0 items-center justify-center rounded-[5px] border border-[#222] bg-[#353535]">
              <Icon name="colors" />
            </button>
          </div>
        </div>
        <div className="flex w-3 shrink-0 flex-col items-center justify-center gap-[2px]">
          <span className="size-[3px] rounded-full bg-[#e8e8e8]" />
          <span className="size-[3px] rounded-full bg-[#e8e8e8]" />
          <span className="size-[3px] rounded-full bg-[#e8e8e8]" />
        </div>
        <LayersPanel />

        {/* Highlighted tools */}
        <div className="pointer-events-none absolute -left-px top-6 h-[47px] w-[41px] rounded-[3px] border-6 border-[#ff6a00]" />
        <div className="pointer-events-none absolute -left-px top-[252px] h-[47px] w-[41px] rounded-[3px] border-6 border-[#ff6a00]" />
      </main>

      {/* Palette */}
      <div className="flex h-[37px] shrink-0 items-end pb-[2px] pl-px">
        <button aria-label="none" className="h-[33px] w-[33px] shrink-0 bg-white">
          <svg viewBox="0 0 33 33" className="size-full">
            <circle cx="16.500" cy="16.500" r="5" fill="#b8b8b8" />
            <path d="M2 2l29 29M31 2L2 31" stroke="#c0202f" strokeWidth="2.200" />
          </svg>
        </button>
        <div className="ml-px flex gap-px">
          <button aria-label="black" className="size-4 bg-black">
            <svg viewBox="0 0 16 16" className="size-4"><circle cx="8" cy="8" r="4.500" fill="none" stroke="#fff" strokeWidth="1.200" /></svg>
          </button>
          {palette.map((color, index) => (
            <button key={index} aria-label={color} className="size-4" style={{ backgroundColor: color }} />
          ))}
        </div>
        <div className="ml-auto mr-px flex shrink-0 items-center">
          <button aria-label="previous row" className="flex h-[34px] w-[31px] items-center justify-center"><Icon name="up" /></button>
          <button aria-label="next row" className="mr-px flex h-[34px] w-[31px] items-center justify-center"><Icon name="chevron" /></button>
          <button aria-label="palette menu" className="flex h-7 w-5 items-center justify-center rounded-[5px] border border-[#1f1f1f]"><Icon name="menu" /></button>
        </div>
      </div>

      {/* Status bar */}
      <footer className="flex h-[34px] shrink-0 items-center [font-feature-settings:'palt']">
        <div className="w-[47px] shrink-0 whitespace-nowrap text-right leading-[17px]">
          <div>フィル:</div>
          <div>ストローク:</div>
        </div>
        <div className="ml-4 flex w-[51px] shrink-0 flex-col items-center leading-[17px]">
          <em>なし</em>
          <div className="h-4 w-[50px] rounded-[3px] bg-black" />
        </div>
        <div className="ml-[10px] mr-[7px] self-end">0.265</div>
        <Spin id="opacity" label="O:" value="100" width="w-[72px]" step="w-[17px]" dimPlus />
        <div className="ml-4 h-[17px] w-[3px] shrink-0 bg-[#4084f0]" />
        <span className="ml-2 w-[56px] shrink-0">Layer 1</span>
        <button aria-label="visibility"><Icon name="eye" /></button>
        <button aria-label="unlock" className="ml-[21px]"><Icon name="unlock" /></button>
        <div className="mx-2 h-6 w-px shrink-0 bg-[#2b2b2b]" />
        <p className="min-w-0 flex-1 truncate">ドラッグでノードを選択、クリックでこのオブジェクトのみを編集します</p>
        <div className="mr-[10px] h-[34px] w-px shrink-0 bg-[#2b2b2b]" />
        <dl className="mr-[7px] grid w-[54px] shrink-0 grid-cols-[auto_1fr] leading-[17px]">
          <dt>X:</dt>
          <dd className="text-right">3.28</dd>
          <dt>Y:</dt>
          <dd className="text-right">37.64</dd>
        </dl>
        <Spin id="zoom" label="Z:" value="186%" width="w-[88px]" step="w-[21px]" />
        <div className="w-[10px] shrink-0" />
        <Spin id="rotation" label="R:" value="0.00°" width="w-[94px]" step="w-[21px]" />
        <div className="w-3 shrink-0" />
      </footer>
    </div>
  );
};

export default App;
